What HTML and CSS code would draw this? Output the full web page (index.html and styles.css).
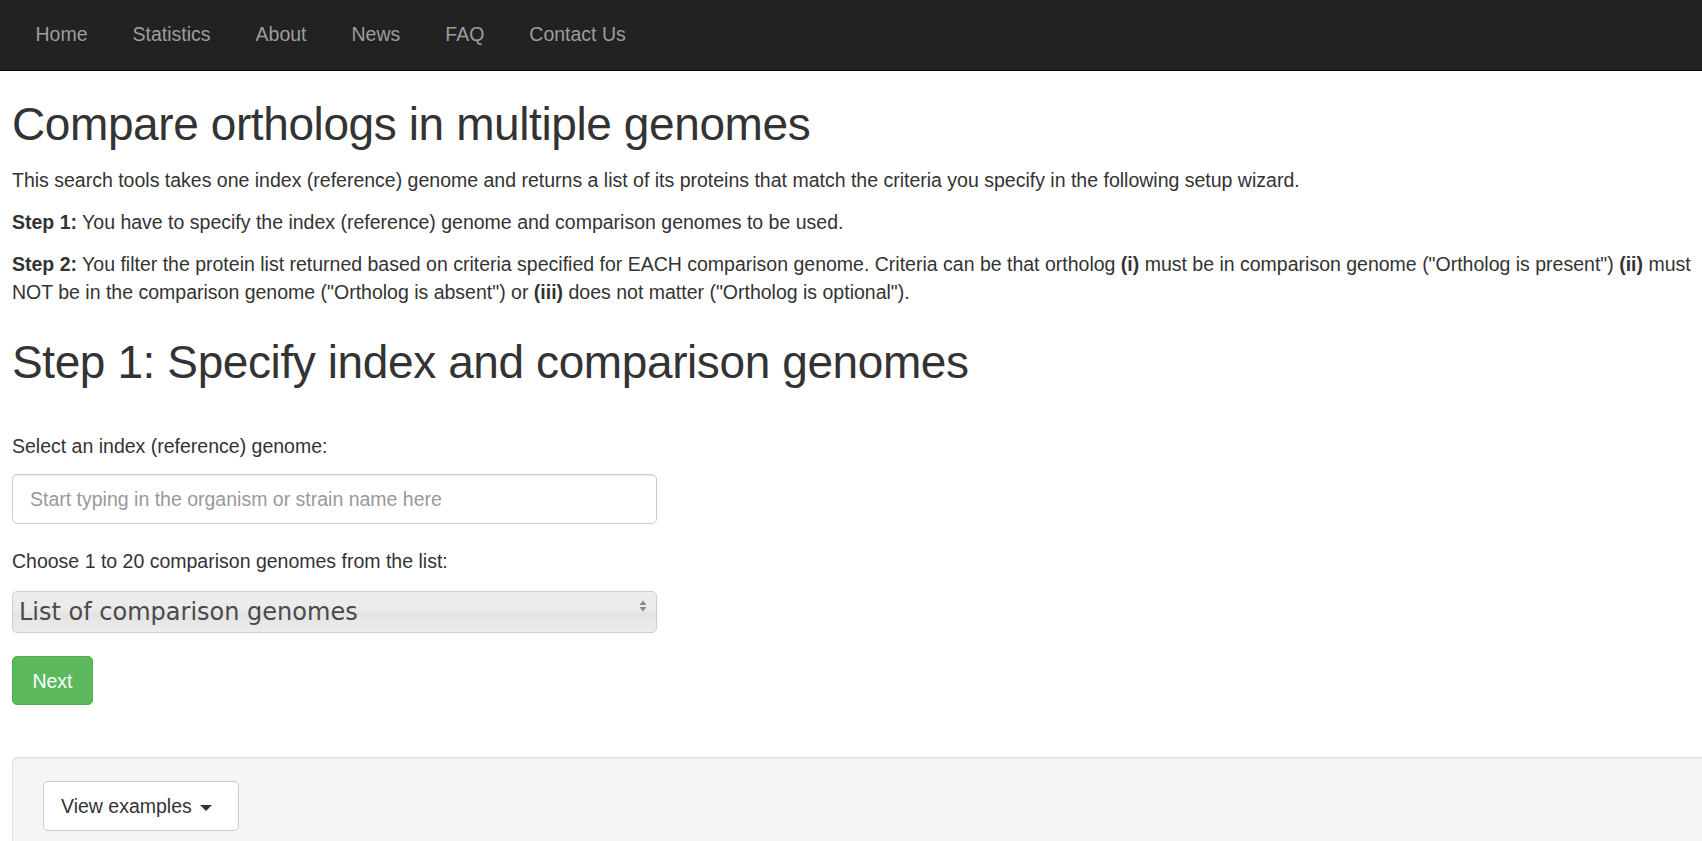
FILE: index.html
```html
<!DOCTYPE html>
<html lang="en">
<head>
<meta charset="utf-8">
<title>Compare orthologs in multiple genomes</title>
<link rel="stylesheet" href="styles.css">
</head>
<body>
<nav class="navbar">
  <ul class="nav">
    <li><a href="#">Home</a></li>
    <li><a href="#">Statistics</a></li>
    <li><a href="#">About</a></li>
    <li><a href="#">News</a></li>
    <li><a href="#">FAQ</a></li>
    <li><a href="#">Contact Us</a></li>
  </ul>
</nav>
<main class="page">
  <h1 class="title">Compare orthologs in multiple genomes</h1>
  <p>This search tools takes one index (reference) genome and returns a list of its proteins that match the criteria you specify in the following setup wizard.</p>
  <p><b>Step 1:</b> You have to specify the index (reference) genome and comparison genomes to be used.</p>
  <p><b>Step 2:</b> You filter the protein list returned based on criteria specified for EACH comparison genome. Criteria can be that ortholog <b>(i)</b> must be in comparison genome ("Ortholog is present") <b>(ii)</b> must NOT be in the comparison genome ("Ortholog is absent") or <b>(iii)</b> does not matter ("Ortholog is optional").</p>
  <h1 class="title title-step">Step 1: Specify index and comparison genomes</h1>
  <form class="wizard">
    <div class="form-group">
      <label class="label" for="idx">Select an index (reference) genome:</label>
      <input id="idx" class="form-control" type="text" placeholder="Start typing in the organism or strain name here">
    </div>
    <div class="form-group">
      <label class="label label-select" for="cmp">Choose 1 to 20 comparison genomes from the list:</label>
      <div class="select-wrap">
        <select id="cmp" class="select">
          <option>List of comparison genomes</option>
        </select>
        <svg class="select-arrows" width="8" height="12" viewBox="0 0 8 12"><path d="M4 0.5 L7.5 5 H0.5 Z M0.5 7 H7.5 L4 11.5 Z" fill="#8a8a8a"/></svg>
      </div>
    </div>
    <button type="button" class="btn btn-success">Next</button>
  </form>
  <div class="well">
    <button type="button" class="btn btn-default">View examples <span class="caret"></span></button>
  </div>
</main>
</body>
</html>
```
FILE: styles.css
```css
* { box-sizing: border-box; }
html, body { overflow: hidden; }
body {
  margin: 0;
  font-family: "Liberation Sans", Arial, Helvetica, sans-serif;
  font-size: 19.5px;
  line-height: 28px;
  color: #333;
  background: #fff;
}
.navbar {
  background: #222;
  border-bottom: 1px solid #080808;
  height: 71px;
  padding-left: 13px;
}
.nav {
  list-style: none;
  margin: 0;
  padding: 0;
  display: flex;
}
.nav a {
  display: block;
  padding: 20px 22.5px 22px;
  line-height: 28px;
  color: #9d9d9d;
  text-decoration: none;
}
.page {
  width: 1712px;
  padding-left: 12px;
}
.title {
  font-family: "Liberation Sans", Arial, sans-serif;
  font-weight: 500;
  font-size: 46px;
  letter-spacing: -0.4px;
  line-height: 55px;
  margin: 26px 0 14px;
  color: #333;
}
.title-step { margin-top: 29px; }
p { margin: 0 0 14px; }
.wizard { margin-top: 42px; }
.form-group { margin-bottom: 23px; }
.label {
  display: block;
  font-weight: normal;
  margin-bottom: 14px;
}
.label-select { margin-bottom: 16px; }
.form-control {
  display: block;
  width: 645px;
  height: 50px;
  padding: 8px 17px;
  font-family: "Liberation Sans", Arial, sans-serif;
  font-size: 19.5px;
  color: #555;
  background: #fff;
  border: 1px solid #ccc;
  border-radius: 5px;
  box-shadow: inset 0 1px 1px rgba(0,0,0,.075);
}
.form-control::placeholder { color: #999; }
.select-wrap {
  position: relative;
  width: 645px;
}
.select {
  display: block;
  width: 645px;
  height: 42px;
  padding: 0 5px 0 6px;
  -webkit-appearance: none;
  appearance: none;
  font-family: "DejaVu Sans", Verdana, sans-serif;
  font-size: 24px;
  color: #4a4a4a;
  border: 1px solid #cfcfcf;
  border-radius: 5px;
  background: linear-gradient(to bottom, #ececec 0%, #ebebeb 45%, #e3e3e3 55%, #ececec 100%);
}
.select-arrows {
  position: absolute;
  right: 10px;
  top: 9px;
}
.btn {
  display: inline-block;
  font-family: "Liberation Sans", Arial, sans-serif;
  font-size: 19.5px;
  line-height: 28px;
  padding: 10px 16px;
  border: 1px solid transparent;
  border-radius: 5px;
  cursor: pointer;
}
.btn-success {
  width: 81px;
  height: 49px;
  color: #fff;
  background: #5cb85c;
  border-color: #4cae4c;
}
.well {
  margin-top: 52px;
  min-height: 100px;
  padding: 23px 30px;
  background: #f5f5f5;
  border: 1px solid #e3e3e3;
  border-radius: 5px;
  box-shadow: inset 0 1px 1px rgba(0,0,0,.05);
}
.btn-default {
  width: 196px;
  height: 50px;
  color: #333;
  background: #fff;
  border-color: #ccc;
  text-align: left;
  padding-left: 17px;
}
.caret {
  display: inline-block;
  width: 0;
  height: 0;
  margin-left: 3px;
  vertical-align: middle;
  border-top: 6px solid #333;
  border-left: 6px solid transparent;
  border-right: 6px solid transparent;
}
```
